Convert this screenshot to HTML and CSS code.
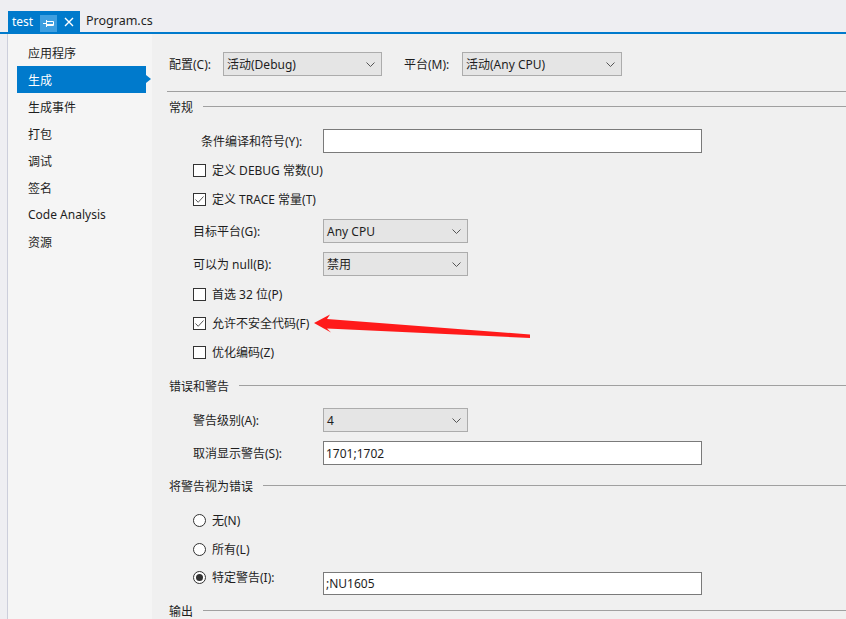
FILE: index.html
```html
<!DOCTYPE html>
<html>
<head>
<meta charset="utf-8">
<link rel="stylesheet" href="styles.css">
</head>
<body>
<div class="app">
  <div class="tabbar">
    <div class="tab tab-active">
      <span class="tab-title">test</span>
      <span class="tab-pin"><svg width="11" height="9" viewBox="0 0 11 9"><path d="M0 4.5H3M3.5 1V8M3.5 2.5H10.5V6.5H3.5M4 5.5H10" stroke="#fff" stroke-width="1" fill="none"/></svg></span>
      <span class="tab-close"><svg width="10" height="10" viewBox="0 0 10 10"><path d="M1 1L9 9M9 1L1 9" stroke="#fff" stroke-width="1.4" fill="none"/></svg></span>
    </div>
    <div class="tab tab-plain">Program.cs</div>
  </div>
  <div class="main">
    <div class="gutter"></div>
    <nav class="sidebar">
      <div class="nav-item">应用程序</div>
      <div class="nav-item nav-selected">生成</div>
      <div class="nav-item">生成事件</div>
      <div class="nav-item">打包</div>
      <div class="nav-item">调试</div>
      <div class="nav-item">签名</div>
      <div class="nav-item">Code Analysis</div>
      <div class="nav-item">资源</div>
    </nav>
    <div class="content">
      <div class="toprow">
        <span class="top-label">配置(C):</span>
        <div class="select sel-config"><span>活动(Debug)</span><svg class="chev" width="9" height="5" viewBox="0 0 9 5"><path d="M0.5 0.5L4.5 4.5L8.5 0.5" stroke="#555" fill="none"/></svg></div>
        <span class="top-label plat-label">平台(M):</span>
        <div class="select sel-platform"><span>活动(Any CPU)</span><svg class="chev" width="9" height="5" viewBox="0 0 9 5"><path d="M0.5 0.5L4.5 4.5L8.5 0.5" stroke="#555" fill="none"/></svg></div>
      </div>
      <div class="rule"></div>

      <div class="section s-general">常规</div>
      <div class="row r-symbols">
        <span class="label label-wide">条件编译和符号(Y):</span>
        <div class="input input-long"></div>
      </div>
      <div class="row r-check r-debug"><span class="box"></span><span>定义 DEBUG 常数(U)</span></div>
      <div class="row r-check r-trace"><span class="box"><svg width="11" height="11" viewBox="0 0 11 11"><path d="M1.5 5.5L4.2 8.3L9.5 2.5" stroke="#555" stroke-width="1" fill="none"/></svg></span><span>定义 TRACE 常量(T)</span></div>
      <div class="row r-target">
        <span class="label">目标平台(G):</span>
        <div class="select sel-short"><span>Any CPU</span><svg class="chev" width="9" height="5" viewBox="0 0 9 5"><path d="M0.5 0.5L4.5 4.5L8.5 0.5" stroke="#555" fill="none"/></svg></div>
      </div>
      <div class="row r-null">
        <span class="label">可以为 null(B):</span>
        <div class="select sel-short"><span>禁用</span><svg class="chev" width="9" height="5" viewBox="0 0 9 5"><path d="M0.5 0.5L4.5 4.5L8.5 0.5" stroke="#555" fill="none"/></svg></div>
      </div>
      <div class="row r-check r-prefer"><span class="box"></span><span>首选 32 位(P)</span></div>
      <div class="row r-check r-unsafe"><span class="box"><svg width="11" height="11" viewBox="0 0 11 11"><path d="M1.5 5.5L4.2 8.3L9.5 2.5" stroke="#555" stroke-width="1" fill="none"/></svg></span><span>允许不安全代码(F)</span></div>
      <div class="row r-check r-optimize"><span class="box"></span><span>优化编码(Z)</span></div>

      <div class="section s-errors">错误和警告</div>
      <div class="row r-level">
        <span class="label">警告级别(A):</span>
        <div class="select sel-short"><span>4</span><svg class="chev" width="9" height="5" viewBox="0 0 9 5"><path d="M0.5 0.5L4.5 4.5L8.5 0.5" stroke="#555" fill="none"/></svg></div>
      </div>
      <div class="row r-suppress">
        <span class="label">取消显示警告(S):</span>
        <div class="input input-long">1701;1702</div>
      </div>

      <div class="section s-treat">将警告视为错误</div>
      <div class="row r-check r-none"><span class="radio"></span><span>无(N)</span></div>
      <div class="row r-check r-all"><span class="radio"></span><span>所有(L)</span></div>
      <div class="row r-specific">
        <span class="radio radio-on"></span><span class="specific-label">特定警告(I):</span>
        <div class="input input-long input-specific">;NU1605</div>
      </div>

      <div class="section s-output">输出</div>
    </div>
  </div>
  <svg class="annotation" width="846" height="619" viewBox="0 0 846 619">
    <polygon points="314,323 330,314.5 327,319 530,334.5 530,338 327,328.5 331,332.5" fill="#ff1a1a"/>
  </svg>
</div>
</body>
</html>
```

FILE: styles.css
```css
* { box-sizing: border-box; }
html, body {
  margin: 0;
  padding: 0;
}
body {
  width: 846px;
  height: 619px;
  overflow: hidden;
  background: #eeeef2;
  font-family: "Noto Sans", "Noto Sans CJK SC", sans-serif;
  font-size: 12px;
  color: #1e1e1e;
}
.app {
  position: relative;
  width: 846px;
  height: 619px;
  display: flex;
  flex-direction: column;
}
.tabbar {
  height: 34px;
  flex: none;
  display: flex;
  align-items: flex-end;
  padding-left: 8px;
  border-bottom: 2px solid #007acc;
}
.tab {
  height: 21px;
  display: flex;
  align-items: center;
  line-height: 1;
}
.tab-active {
  width: 72px;
  background: #007acc;
  color: #fff;
  padding-left: 4px;
}
.tab-title { width: 28px; }
.tab-pin {
  width: 17px;
  height: 17px;
  margin-top: 4px;
  background: #3f9fe0;
  display: flex;
  align-items: center;
  justify-content: center;
}
.tab-close {
  width: 23px;
  height: 21px;
  display: flex;
  align-items: center;
  justify-content: center;
}
.tab-plain {
  padding-left: 6px;
  font-size: 12.5px;
}
.main {
  flex: 1;
  display: flex;
  min-height: 0;
}
.gutter {
  width: 8px;
  flex: none;
  border-right: 1px solid #cccedb;
}
.sidebar {
  width: 144px;
  flex: none;
  background: #f5f5f5;
  padding-top: 5px;
}
.nav-item {
  height: 27px;
  margin-left: 9px;
  width: 129px;
  padding-left: 11px;
  display: flex;
  align-items: center;
}
.nav-selected {
  position: relative;
  background: #007acc;
  color: #fff;
}
.nav-selected::after {
  content: "";
  position: absolute;
  right: -5px;
  top: 9px;
  border-left: 5px solid #007acc;
  border-top: 4.5px solid transparent;
  border-bottom: 4.5px solid transparent;
}
.content {
  flex: 1;
  background: #f0f0f0;
  padding-left: 15px;
}
.toprow {
  margin-top: 18px;
  height: 24px;
  display: flex;
  align-items: center;
  padding-left: 2px;
}
.top-label { width: 54px; }
.plat-label { margin-left: 22px; width: 58px; }
.select {
  height: 24px;
  background: #e5e5e5;
  border: 1px solid #acacac;
  display: flex;
  align-items: center;
  justify-content: space-between;
  padding: 0 6px 0 3px;
}
.sel-config { width: 159px; }
.sel-platform { width: 160px; }
.sel-short { width: 145px; }
.chev { flex: none; }
.rule {
  margin-top: 15px;
  height: 1px;
  background: #a0a0a0;
}
.section {
  height: 24px;
  display: flex;
  align-items: center;
  gap: 10px;
  padding-left: 2px;
}
.section::after {
  content: "";
  flex: 1;
  height: 1px;
  background: #a0a0a0;
  margin-top: -1px;
}
.s-general { margin-top: 3px; }
.s-errors { margin-top: 10px; }
.s-treat { margin-top: 9px; }
.s-output { margin-top: 9px; }
.row {
  height: 24px;
  display: flex;
  align-items: center;
  padding-left: 26px;
}
.label { width: 130px; flex: none; }
.label-wide { width: 122px; margin-left: 8px; }
.input {
  height: 24px;
  background: #fff;
  border: 1px solid #7a7a7a;
  display: flex;
  align-items: center;
  padding-left: 2px;
}
.input-long { width: 379px; }
.box {
  width: 13px;
  height: 13px;
  flex: none;
  border: 1px solid #333;
  background: #fff;
  margin-right: 6px;
  display: flex;
  align-items: center;
  justify-content: center;
}
.radio {
  width: 13px;
  height: 13px;
  flex: none;
  border: 1px solid #333;
  border-radius: 50%;
  background: #fff;
  margin-right: 6px;
  display: flex;
  align-items: center;
  justify-content: center;
}
.radio-on::after {
  content: "";
  width: 7px;
  height: 7px;
  border-radius: 50%;
  background: #333;
}
.r-symbols { margin-top: 10px; }
.r-debug { margin-top: 5px; }
.r-trace { margin-top: 5px; }
.r-target { margin-top: 8px; }
.r-null { margin-top: 9px; }
.r-prefer { margin-top: 6px; }
.r-unsafe { margin-top: 5px; }
.r-optimize { margin-top: 5px; }
.r-level { margin-top: 10px; }
.r-suppress { margin-top: 9px; }
.r-none { margin-top: 10px; }
.r-all { margin-top: 5px; }
.r-specific {
  margin-top: 5px;
  align-items: flex-start;
}
.r-specific .radio { margin-top: 5px; }
.specific-label {
  width: 111px;
  line-height: 24px;
  flex: none;
}
.input-specific {
  height: 23px;
  margin-top: 6px;
}
.annotation {
  position: absolute;
  left: 0;
  top: 0;
  pointer-events: none;
}
```
